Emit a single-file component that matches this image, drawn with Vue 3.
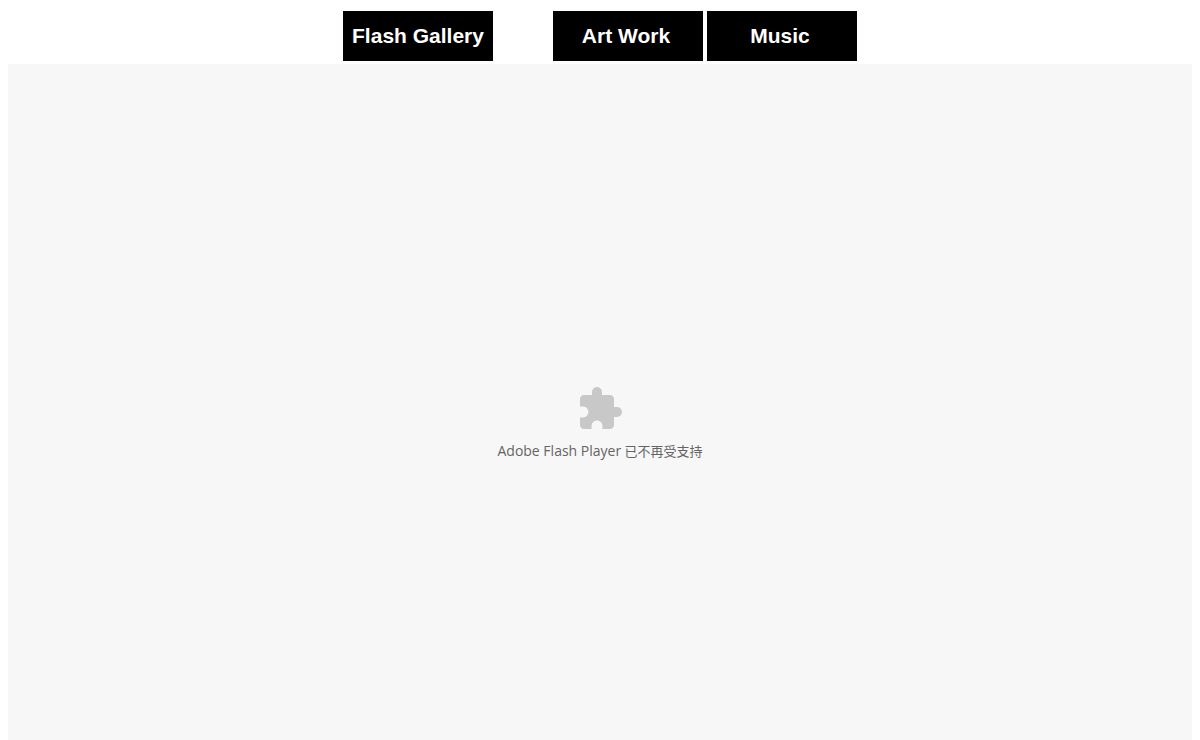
<script setup>
const groups = [
  [{ label: 'Flash Gallery', name: 'gallery' }],
  [
    { label: 'Art Work', name: 'art' },
    { label: 'Music', name: 'music' },
  ],
]
</script>

<template>
  <div class="page">
    <nav class="nav">
      <div v-for="(group, i) in groups" :key="i" class="group">
        <a v-for="item in group" :key="item.name" :href="'#' + item.name" :class="['tab', item.name]">{{ item.label }}</a>
      </div>
    </nav>
    <main class="plugin">
      <svg class="puzzle" viewBox="0 0 24 24" aria-hidden="true">
        <path d="M20.5 11H19V7c0-1.1-.9-2-2-2h-4V3.5a2.5 2.5 0 0 0-5 0V5H4c-1.1 0-1.99.9-1.99 2v3.8H3.5c1.49 0 2.7 1.21 2.7 2.7s-1.21 2.7-2.7 2.7H2V20c0 1.1.9 2 2 2h3.8v-1.5c0-1.49 1.21-2.7 2.7-2.7s2.7 1.21 2.7 2.7V22H17c1.1 0 2-.9 2-2v-4h1.5a2.5 2.5 0 0 0 0-5z" />
      </svg>
      <p class="message"><span class="product">Adobe Flash Player</span> 已不再受支持</p>
    </main>
  </div>
</template>

<style>
body {
  background: #fff;
}
</style>

<style scoped>
.page {
  box-sizing: border-box;
  min-height: 100vh;
  padding: 11px 8px 0;
  display: flex;
  flex-direction: column;
  gap: 3px;
  font-family: "Liberation Sans", Arial, sans-serif;
}
.nav {
  display: flex;
  justify-content: center;
  gap: 60px;
}
.group {
  display: flex;
  gap: 4px;
}
.tab {
  box-sizing: border-box;
  width: 150px;
  height: 50px;
  background: #000;
  color: #fff;
  font-size: 21px;
  font-weight: bold;
  line-height: 50px;
  text-align: center;
  text-decoration: none;
  white-space: nowrap;
}
.art,
.music {
  padding-right: 4px;
}
.plugin {
  flex: 1;
  background: #f7f7f7;
  display: flex;
  flex-direction: column;
  align-items: center;
  justify-content: center;
  gap: 8px;
  padding-top: 42px;
}
.puzzle {
  width: 48px;
  height: 48px;
  fill: #c8c8c8;
}
.message {
  margin: 0;
  color: #646464;
  font-family: "Open Sans", "Noto Sans CJK SC", sans-serif;
  font-size: 13px;
  line-height: 20px;
}
.product {
  font-size: 14px;
}
</style>
